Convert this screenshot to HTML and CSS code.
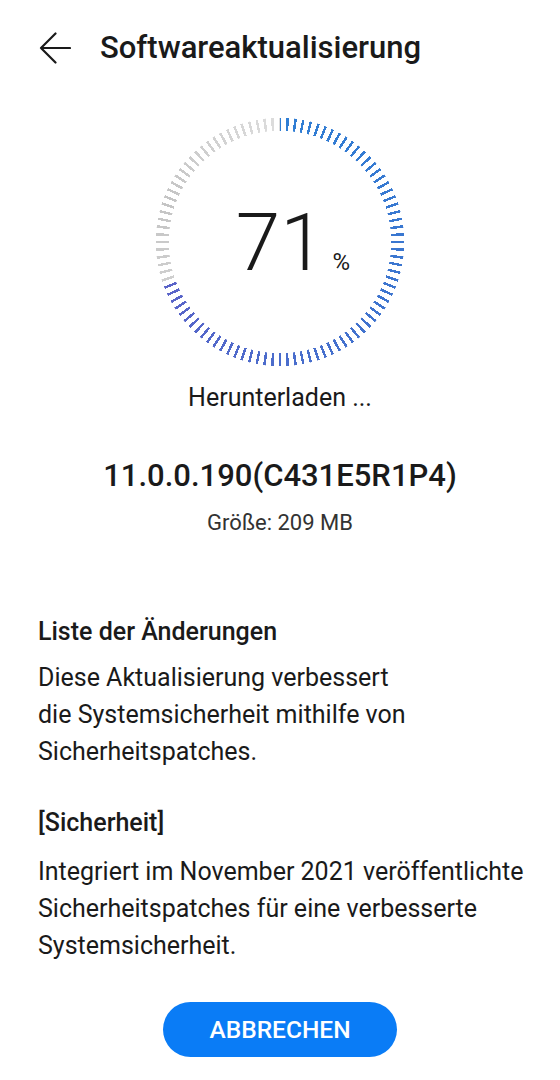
FILE: index.html
```html
<!DOCTYPE html>
<html lang="de">
<head>
<meta charset="utf-8">
<title>Softwareaktualisierung</title>
<link rel="stylesheet" href="styles.css">
</head>
<body>
<div class="screen">
  <header class="appbar">
    <svg class="back" viewBox="0 0 32 32" width="32" height="32" aria-hidden="true">
      <path d="M16.5 1.5 L2 16 L16.5 30.5 M2 16 H31" fill="none" stroke="#1a1a1a" stroke-width="2.2" stroke-linecap="round" stroke-linejoin="round"/>
    </svg>
    <h1 class="title">Softwareaktualisierung</h1>
  </header>

  <section class="progress">
    <div class="ring-wrap">
      <div class="ring"></div>
      <div class="value"><span class="num">71</span><span class="unit">%</span></div>
    </div>
    <p class="status">Herunterladen ...</p>
  </section>

  <section class="version">
    <p class="ver">11.0.0.190(C431E5R1P4)</p>
    <p class="size">Größe: 209 MB</p>
  </section>

  <section class="notes">
    <h2 class="notes-title">Liste der Änderungen</h2>
    <p class="notes-text">Diese Aktualisierung verbessert<br>die Systemsicherheit mithilfe von<br>Sicherheitspatches.</p>
    <h2 class="notes-title second">[Sicherheit]</h2>
    <p class="notes-text">Integriert im November 2021 veröffentlichte Sicherheitspatches für eine verbesserte Systemsicherheit.</p>
  </section>

  <div class="actions">
    <button class="cancel" type="button">ABBRECHEN</button>
  </div>
</div>
</body>
</html>
```

FILE: styles.css
```css
* { box-sizing: border-box; }

html, body {
  margin: 0;
  padding: 0;
  background: #ffffff;
}

body {
  font-family: Roboto, "Noto Sans", "Liberation Sans", sans-serif;
  color: #1a1a1a;
}

.screen {
  width: 560px;
  height: 1080px;
  display: flex;
  flex-direction: column;
}

p, h1, h2 { margin: 0; }

/* App bar */
.appbar {
  display: flex;
  align-items: center;
  height: 56px;
  margin-top: 20px;
  padding-left: 39px;
  gap: 29px;
}

.back { flex: none; display: block; }

.title {
  font-size: 31px;
  font-weight: 500;
  line-height: 56px;
  color: #1a1a1a;
}

/* Progress ring */
.progress {
  display: flex;
  flex-direction: column;
  align-items: center;
  margin-top: 41px;
}

.ring-wrap {
  display: grid;
  width: 250px;
  height: 250px;
  margin-left: -1px;
}

.ring, .value { grid-area: 1 / 1; }

.ring {
  width: 250px;
  height: 250px;
  border-radius: 50%;
  background: conic-gradient(
    #2f7ed4 0deg,
    #3d74cf 120deg,
    #5a63c8 250deg,
    #cfcfcf 250deg,
    #c4c4c4 290deg,
    #dddddd 360deg
  );
  -webkit-mask:
    repeating-conic-gradient(from -0.6deg, #000 0deg 1.2deg, transparent 1.2deg 3.6deg),
    radial-gradient(circle at center, transparent 0 111px, #000 111.5px 124px, transparent 124.5px);
  -webkit-mask-composite: source-in;
  mask:
    repeating-conic-gradient(from -0.6deg, #000 0deg 1.2deg, transparent 1.2deg 3.6deg),
    radial-gradient(circle at center, transparent 0 111px, #000 111.5px 124px, transparent 124.5px);
  mask-composite: intersect;
}

.value {
  display: flex;
  align-items: baseline;
  justify-content: center;
  padding-left: 27px;
  padding-top: 2px;
  align-self: center;
}

.num {
  font-size: 80px;
  font-weight: 300;
  line-height: 80px;
  color: #1a1a1a;
}

.unit {
  font-size: 24px;
  font-weight: 400;
  margin-left: 8px;
  color: #1a1a1a;
}

.status {
  margin-top: 16px;
  font-size: 25px;
  line-height: 30px;
  color: #1a1a1a;
}

/* Version */
.version {
  display: flex;
  flex-direction: column;
  align-items: center;
  margin-top: 45px;
}

.ver {
  font-size: 31px;
  font-weight: 500;
  line-height: 36px;
  color: #1a1a1a;
}

.size {
  margin-top: 17px;
  font-size: 22px;
  line-height: 24px;
  color: #333333;
}

/* Notes */
.notes {
  margin-top: 83px;
  padding: 0 16px 0 38px;
}

.notes-title {
  font-size: 25px;
  font-weight: 500;
  line-height: 28px;
  color: #1a1a1a;
}

.notes-title.second { margin-top: 39px; }

.notes-text {
  margin-top: 12.5px;
  font-size: 25px;
  line-height: 37px;
  color: #1a1a1a;
}

.notes-title.second + .notes-text { margin-top: 16px; }

/* Action */
.actions {
  display: flex;
  justify-content: center;
  margin-top: 38px;
}

.cancel {
  width: 234px;
  height: 55px;
  border: none;
  border-radius: 28px;
  background: #0a7cf6;
  color: #ffffff;
  font-family: Roboto, "Noto Sans", "Liberation Sans", sans-serif;
  font-size: 24.5px;
  font-weight: 500;
  padding: 0;
}
```
